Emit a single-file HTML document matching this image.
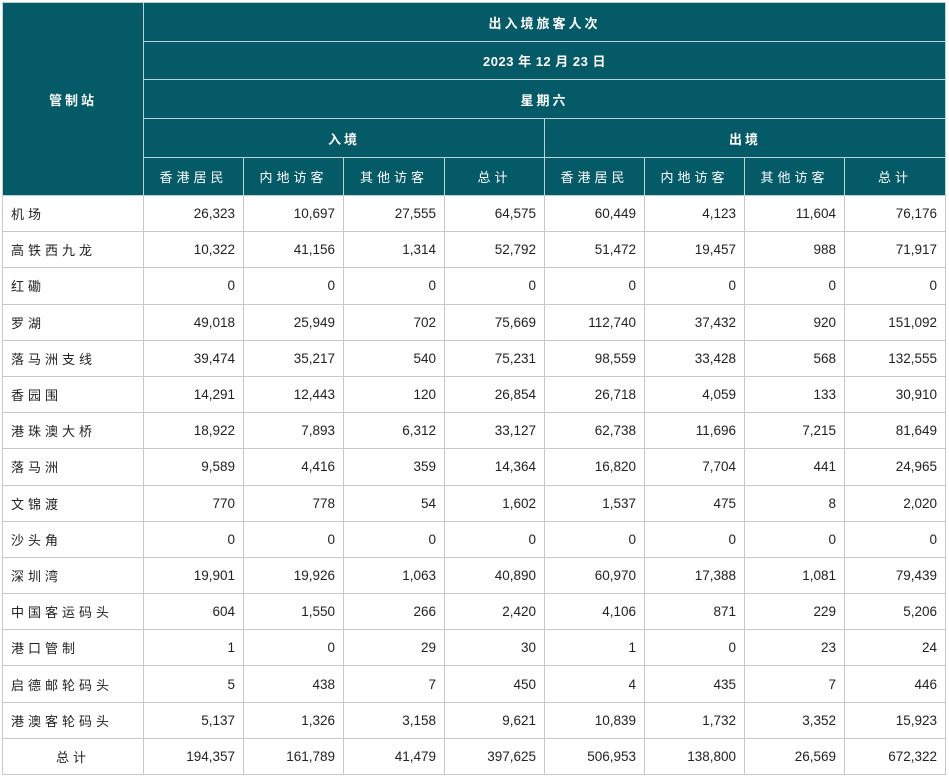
<!DOCTYPE html>
<html><head><meta charset="utf-8"><style>
body{margin:0;background:#fff;}
table{position:absolute;left:2px;top:2px;border-collapse:collapse;table-layout:fixed;font-family:"Liberation Sans","Noto Sans CJK SC",sans-serif;font-size:13px;color:#222;}
td,th{border:1px solid #c8c8c8;padding:0 8px;box-sizing:border-box;}
th{background:#045a66;color:#fff;font-weight:bold;text-align:center;letter-spacing:3px;border-color:#b9d3d6;}
th.s{font-weight:normal;letter-spacing:4px;}
tbody td{height:36.2px;text-align:right;font-size:13.5px;}
tbody td:first-child{text-align:left;letter-spacing:4px;font-size:13px;}
tr.t td:first-child{text-align:center;}
</style></head><body>
<table>
<colgroup><col style="width:141px"><col style="width:100px"><col style="width:100px"><col style="width:101px"><col style="width:100px"><col style="width:100px"><col style="width:100px"><col style="width:100px"><col style="width:101px"></colgroup>
<thead>
<tr style="height:39px"><th rowspan="5">管制站</th><th colspan="8">出入境旅客人次</th></tr>
<tr style="height:38px"><th colspan="8" style="letter-spacing:0.5px">2023 年 12 月 23 日</th></tr>
<tr style="height:39px"><th colspan="8">星期六</th></tr>
<tr style="height:39px"><th colspan="4">入境</th><th colspan="4">出境</th></tr>
<tr style="height:38px"><th class="s">香港居民</th><th class="s">内地访客</th><th class="s">其他访客</th><th class="s">总计</th><th class="s">香港居民</th><th class="s">内地访客</th><th class="s">其他访客</th><th class="s">总计</th></tr>
</thead>
<tbody>
<tr><td>机场</td><td>26,323</td><td>10,697</td><td>27,555</td><td>64,575</td><td>60,449</td><td>4,123</td><td>11,604</td><td>76,176</td></tr>
<tr><td>高铁西九龙</td><td>10,322</td><td>41,156</td><td>1,314</td><td>52,792</td><td>51,472</td><td>19,457</td><td>988</td><td>71,917</td></tr>
<tr><td>红磡</td><td>0</td><td>0</td><td>0</td><td>0</td><td>0</td><td>0</td><td>0</td><td>0</td></tr>
<tr><td>罗湖</td><td>49,018</td><td>25,949</td><td>702</td><td>75,669</td><td>112,740</td><td>37,432</td><td>920</td><td>151,092</td></tr>
<tr><td>落马洲支线</td><td>39,474</td><td>35,217</td><td>540</td><td>75,231</td><td>98,559</td><td>33,428</td><td>568</td><td>132,555</td></tr>
<tr><td>香园围</td><td>14,291</td><td>12,443</td><td>120</td><td>26,854</td><td>26,718</td><td>4,059</td><td>133</td><td>30,910</td></tr>
<tr><td>港珠澳大桥</td><td>18,922</td><td>7,893</td><td>6,312</td><td>33,127</td><td>62,738</td><td>11,696</td><td>7,215</td><td>81,649</td></tr>
<tr><td>落马洲</td><td>9,589</td><td>4,416</td><td>359</td><td>14,364</td><td>16,820</td><td>7,704</td><td>441</td><td>24,965</td></tr>
<tr><td>文锦渡</td><td>770</td><td>778</td><td>54</td><td>1,602</td><td>1,537</td><td>475</td><td>8</td><td>2,020</td></tr>
<tr><td>沙头角</td><td>0</td><td>0</td><td>0</td><td>0</td><td>0</td><td>0</td><td>0</td><td>0</td></tr>
<tr><td>深圳湾</td><td>19,901</td><td>19,926</td><td>1,063</td><td>40,890</td><td>60,970</td><td>17,388</td><td>1,081</td><td>79,439</td></tr>
<tr><td>中国客运码头</td><td>604</td><td>1,550</td><td>266</td><td>2,420</td><td>4,106</td><td>871</td><td>229</td><td>5,206</td></tr>
<tr><td>港口管制</td><td>1</td><td>0</td><td>29</td><td>30</td><td>1</td><td>0</td><td>23</td><td>24</td></tr>
<tr><td>启德邮轮码头</td><td>5</td><td>438</td><td>7</td><td>450</td><td>4</td><td>435</td><td>7</td><td>446</td></tr>
<tr><td>港澳客轮码头</td><td>5,137</td><td>1,326</td><td>3,158</td><td>9,621</td><td>10,839</td><td>1,732</td><td>3,352</td><td>15,923</td></tr>
<tr class="t"><td>总计</td><td>194,357</td><td>161,789</td><td>41,479</td><td>397,625</td><td>506,953</td><td>138,800</td><td>26,569</td><td>672,322</td></tr>
</tbody></table>
</body></html>
